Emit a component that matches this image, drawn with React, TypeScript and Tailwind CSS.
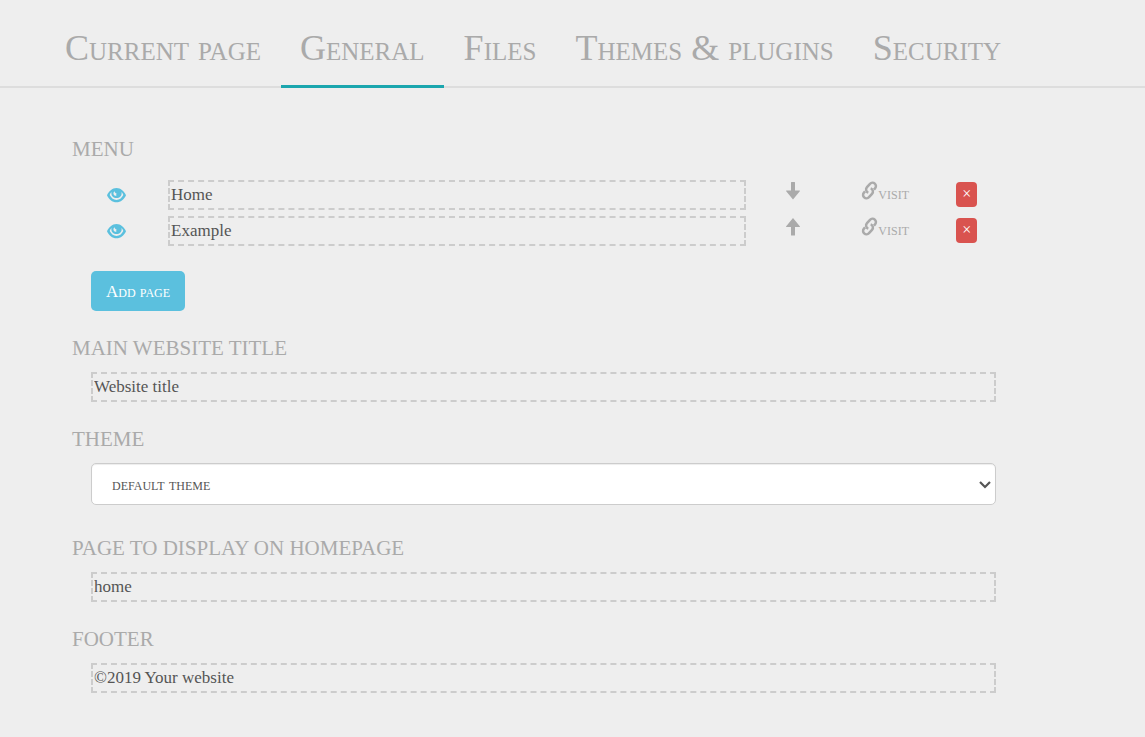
import { useState } from "react";
import type { ReactNode } from "react";

const tabs = ["Current page", "General", "Files", "Themes & plugins", "Security"];

const fieldClass =
  "block h-[30px] w-full min-w-0 border-2 border-dashed border-[#ccc] bg-transparent px-px text-[17px] leading-6 text-[#555] outline-none";

function EyeIcon() {
  return (
    <svg viewBox="0 0 19 15" className="h-[15px] w-[19px]" fill="currentColor" aria-hidden="true">
      <path
        fillRule="evenodd"
        d="M9.5 0C5.200 0 1.800 3.300 0 7.200 1.800 11.100 5.200 14.300 9.500 14.300S17.200 11.100 19 7.200C17.200 3.300 13.800 0 9.500 0ZM4.500 3.900C4.100 6 4.600 7.400 5.600 8.500 6.600 9.600 8 10.100 9.500 10.100S12.400 9.600 13.400 8.500C14.400 7.400 14.900 6 14.500 3.900 15.500 4.800 16 5.900 16.300 7.100 14.600 10.300 12.400 12 9.500 12S4.400 10.300 2.700 7.100C3 5.900 3.500 4.800 4.500 3.900ZM7.600 3.300C6.500 4 6.200 5.300 6.700 6.400 7.200 7.400 8.200 7.900 9.400 7.700 9.100 7 9.100 6.200 9.600 5.600 8.500 5.400 7.800 4.600 7.600 3.300Z"
      />
    </svg>
  );
}

function ArrowIcon({ up }: { up?: boolean }) {
  return (
    <svg viewBox="0 0 14 18" className="h-[18px] w-[14px]" fill="currentColor" aria-hidden="true">
      {up ? (
        <path d="M7 0 13.800 8.200Q14.300 9 13.400 9H9V17Q9 17.500 8.500 17.500H5.500Q5 17.500 5 17V9H.6Q-.3 9 .2 8.200Z" />
      ) : (
        <path d="M7 17.500 .2 9.300Q-.3 8.500 .6 8.500H5V.5Q5 0 5.500 0H8.500Q9 0 9 .5V8.500H13.400Q14.300 8.500 13.800 9.300Z" />
      )}
    </svg>
  );
}

function LinkIcon() {
  return (
    <svg
      viewBox="0 0 17 19"
      className="h-[19px] w-[17px]"
      fill="none"
      stroke="currentColor"
      strokeWidth="2.5"
      aria-hidden="true"
    >
      <g transform="translate(8.5 9.500) rotate(-48)">
        <path d="M3.600 2.700H5.300A3.400 3.400 0 0 0 5.300 -4.100H.8A3.400 3.400 0 0 0 -2.400 .6" />
        <path d="M-3.600 -2.700H-5.300A3.400 3.400 0 0 0 -5.300 4.100H-.8A3.400 3.400 0 0 0 2.400 -.6" />
      </g>
    </svg>
  );
}

function Section({ title, htmlFor, children }: { title: string; htmlFor?: string; children: ReactNode }) {
  const text = "mb-[9px] block text-[21px] leading-[30px] text-[#aaa] uppercase";
  return (
    <section>
      {htmlFor ? (
        <label htmlFor={htmlFor} className={text}>
          {title}
        </label>
      ) : (
        <h2 className={text}>{title}</h2>
      )}
      <div className="pl-[19px]">{children}</div>
    </section>
  );
}

function MenuRow({ name, up }: { name: string; up?: boolean }) {
  return (
    <li className="grid grid-cols-[77px_minmax(0,1fr)_94px_90px_66px] items-center">
      <button type="button" aria-label={`Hide ${name}`} className="ml-4 justify-self-start text-[#5bc0de]">
        <EyeIcon />
      </button>
      <input aria-label="Page name" defaultValue={name} className={fieldClass} />
      <button
        type="button"
        aria-label={up ? "Move up" : "Move down"}
        className="-mt-2 justify-self-center text-[#aaa]"
      >
        <ArrowIcon up={up} />
      </button>
      <a
        href={`#${name.toLowerCase()}`}
        className="-mt-0.5 flex items-center justify-self-center text-[17px] leading-6 text-[#aaa] [font-variant:small-caps]"
      >
        <span className="-mt-2">
          <LinkIcon />
        </span>
        visit
      </a>
      <button
        type="button"
        aria-label={`Delete ${name}`}
        className="-mt-0.5 ml-[26px] h-[25px] w-[21px] rounded-[4px] bg-[#d9534f] text-center text-base leading-6 text-white"
      >
        ×
      </button>
    </li>
  );
}

export default function App() {
  const [active, setActive] = useState("General");

  return (
    <div className="min-h-screen bg-[#eee] font-['Liberation_Serif',serif]">
      <nav className="border-b-2 border-[#ddd] pl-[46px]">
        <div role="tablist" className="-mb-0.5 flex gap-px">
          {tabs.map((tab) => (
            <button
              key={tab}
              type="button"
              role="tab"
              aria-selected={tab === active}
              onClick={() => setActive(tab)}
              className={
                "h-[88px] border-b-3 px-[19px] pt-2.5 text-4xl whitespace-nowrap text-[#aaa] [font-variant:small-caps] " +
                (tab === active ? "border-[#1ba6ae]" : "border-transparent")
              }
            >
              {tab}
            </button>
          ))}
        </div>
      </nav>

      <main className="flex flex-col gap-[22px] pt-[46px] pr-[13%] pb-11 pl-[72px]">
        <Section title="Menu">
          <ul className="flex flex-col gap-1.5 pt-[7px]">
            <MenuRow name="Home" />
            <MenuRow name="Example" up />
          </ul>
          <button
            type="button"
            className="mt-[25px] h-10 rounded-[5px] bg-[#5bc0de] px-[15px] pt-0.5 text-[17px] text-white [font-variant:small-caps]"
          >
            Add page
          </button>
        </Section>

        <Section title="Main website title" htmlFor="site-title">
          <input id="site-title" defaultValue="Website title" className={fieldClass} />
        </Section>

        <Section title="Theme" htmlFor="theme">
          <div className="relative mb-1.5">
            <select
              id="theme"
              className="block h-[42px] w-full appearance-none rounded-[5px] border border-[#ccc] bg-white px-5 pt-0.5 text-[17px] text-[#555] shadow-[inset_0_1px_1px_rgba(0,0,0,0.075)] [font-variant:small-caps]"
            >
              <option>default theme</option>
            </select>
            <svg
              viewBox="0 0 12 8"
              className="pointer-events-none absolute top-[18px] right-[5px] h-2 w-3 text-[#555]"
              fill="none"
              stroke="currentColor"
              strokeWidth="2.2"
              aria-hidden="true"
            >
              <path d="M1 1 6 6 11 1" />
            </svg>
          </div>
        </Section>

        <Section title="Page to display on homepage" htmlFor="homepage">
          <input id="homepage" defaultValue="home" className={fieldClass} />
        </Section>

        <Section title="Footer" htmlFor="footer">
          <input id="footer" defaultValue="©2019 Your website" className={fieldClass} />
        </Section>
      </main>
    </div>
  );
}
